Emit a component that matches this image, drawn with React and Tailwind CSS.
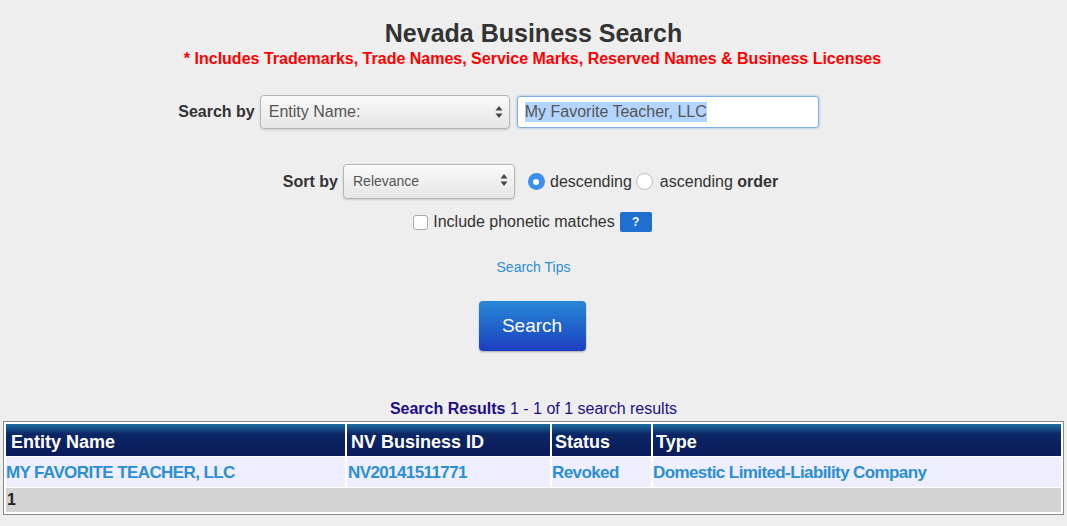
import React from 'react';

const SelectBox = ({ label, className, textClass }) => (
    <div className={`flex items-center justify-between border border-[#b5b5b5] rounded bg-gradient-to-b from-[#fafafa] to-[#e6e6e6] shadow-[0_1px_2px_rgba(0,0,0,0.15)] ${className}`}>
        <span className={textClass}>{label}</span>
        <svg width="8" height="14" viewBox="0 0 8 14" className="mr-[6px]">
            <path d="M4 1 L7.5 5.5 H0.5 Z" fill="#444" />
            <path d="M4 13 L7.5 8.5 H0.5 Z" fill="#444" />
        </svg>
    </div>
);

const App = () => {
    return (
        <div className="w-[1067px] h-[526px] bg-[#eeeeee] font-['Liberation_Sans',Arial,sans-serif] text-[#333] overflow-hidden">
            <div className="flex flex-col items-center pt-[18px]">
                <h1 className="text-[25px] leading-[30px] font-bold text-[#333]">Nevada Business Search</h1>
                <p className="text-[16px] leading-[18px] font-bold text-[#ff0000] mt-[2px] -ml-[2px]">
                    * Includes Trademarks, Trade Names, Service Marks, Reserved Names &amp; Business Licenses
                </p>

                {/* search by */}
                <div className="flex items-center mt-[27px] mr-[70px]">
                    <span className="text-[16px] font-bold mr-[5px]">Search by</span>
                    <SelectBox
                        label="Entity Name:"
                        className="w-[250px] h-[34px] pl-[8px]"
                        textClass="text-[16px] text-[#555]"
                    />
                    <div className="ml-[7px] w-[302px] h-[32px] bg-white border border-[#7fb1e8] rounded-[3px] shadow-[0_0_3px_rgba(80,150,230,0.6)] flex items-center pl-[7px]">
                        <span className="text-[16px] text-[#555] bg-[#b3d4fc] leading-[20px]">My Favorite Teacher, LLC</span>
                    </div>
                </div>

                {/* sort by */}
                <div className="flex items-center mt-[35px] mr-[6px]">
                    <span className="text-[16px] font-bold mr-[5px]">Sort by</span>
                    <SelectBox
                        label="Relevance"
                        className="w-[172px] h-[35px] pl-[9px] items-start pt-[8px]"
                        textClass="text-[14px] text-[#555] leading-[16px]"
                    />
                    <span className="ml-[13px] w-[17px] h-[17px] rounded-full bg-[#3a8ff0] flex items-center justify-center">
                        <span className="w-[6px] h-[6px] rounded-full bg-white" />
                    </span>
                    <span className="text-[16px] ml-[5px] text-[#333]">descending</span>
                    <span className="ml-[4px] w-[17px] h-[17px] rounded-full bg-white border border-[#bbb]" />
                    <span className="text-[16px] ml-[7px] text-[#333]">ascending <b>order</b></span>
                </div>

                <div className="flex items-center mt-[11px] -ml-[2px]">
                    <span className="w-[15px] h-[15px] bg-white border border-[#aaa] rounded-[3px]" />
                    <span className="text-[16px] ml-[5px] text-[#333]">Include phonetic matches</span>
                    <span className="ml-[5px] w-[32px] h-[20px] bg-[#1e6fcf] rounded-[2px] text-white text-[12px] font-bold flex items-center justify-center">?</span>
                </div>

                <a className="text-[14px] text-[#2a8fd4] mt-[25px] leading-[16px]">Search Tips</a>

                <button className="mt-[26px] w-[107px] h-[50px] rounded-[4px] bg-gradient-to-b from-[#2a87d5] to-[#1f3dbf] text-white text-[19px] shadow-[0_1px_2px_rgba(0,0,0,0.3)] -ml-[3px]">
                    Search
                </button>

                <p className="mt-[49px] text-[16px] leading-[18px] text-[#1a0f86]">
                    <b>Search Results</b> 1 - 1 of 1 search results
                </p>
            </div>

            {/* results table */}
            <div className="mx-[3px] mt-[3px] border border-[#8a8a8a] p-[2px] bg-white">
                <table className="w-full border-collapse">
                    <thead>
                        <tr className="bg-[linear-gradient(to_bottom,#1d6fa0_0px,#0c2766_10px,#0b1b5c_30px)] text-white text-[18px] font-bold text-left">
                            <th className="w-[340px] h-[30px] pt-[5px] pl-[5px] border-r-2 border-white">Entity Name</th>
                            <th className="w-[205px] pt-[5px] pl-[4px] border-r-2 border-white">NV Business ID</th>
                            <th className="w-[101px] pt-[5px] pl-[3px] border-r-2 border-white">Status</th>
                            <th className="pt-[5px] pl-[3px]">Type</th>
                        </tr>
                    </thead>
                    <tbody>
                        <tr className="bg-[#eeeeff] text-[17px] font-bold text-[#2a8fd4] tracking-[-0.6px]">
                            <td className="h-[31px] pt-[2px] pl-[0px] border-t border-white border-r-2">MY FAVORITE TEACHER, LLC</td>
                            <td className="pt-[2px] pl-[1px] border-t border-white border-r-2">NV20141511771</td>
                            <td className="pt-[2px] pl-[0px] border-t border-white border-r-2">Revoked</td>
                            <td className="pt-[2px] border-t border-white">Domestic Limited-Liability Company</td>
                        </tr>
                        <tr className="bg-[#d3d3d3]">
                            <td colSpan={4} className="h-[24px] pl-[1px] text-[16px] font-bold text-[#222] border-t border-white">1</td>
                        </tr>
                    </tbody>
                </table>
            </div>
        </div>
    );
};

export default App;
